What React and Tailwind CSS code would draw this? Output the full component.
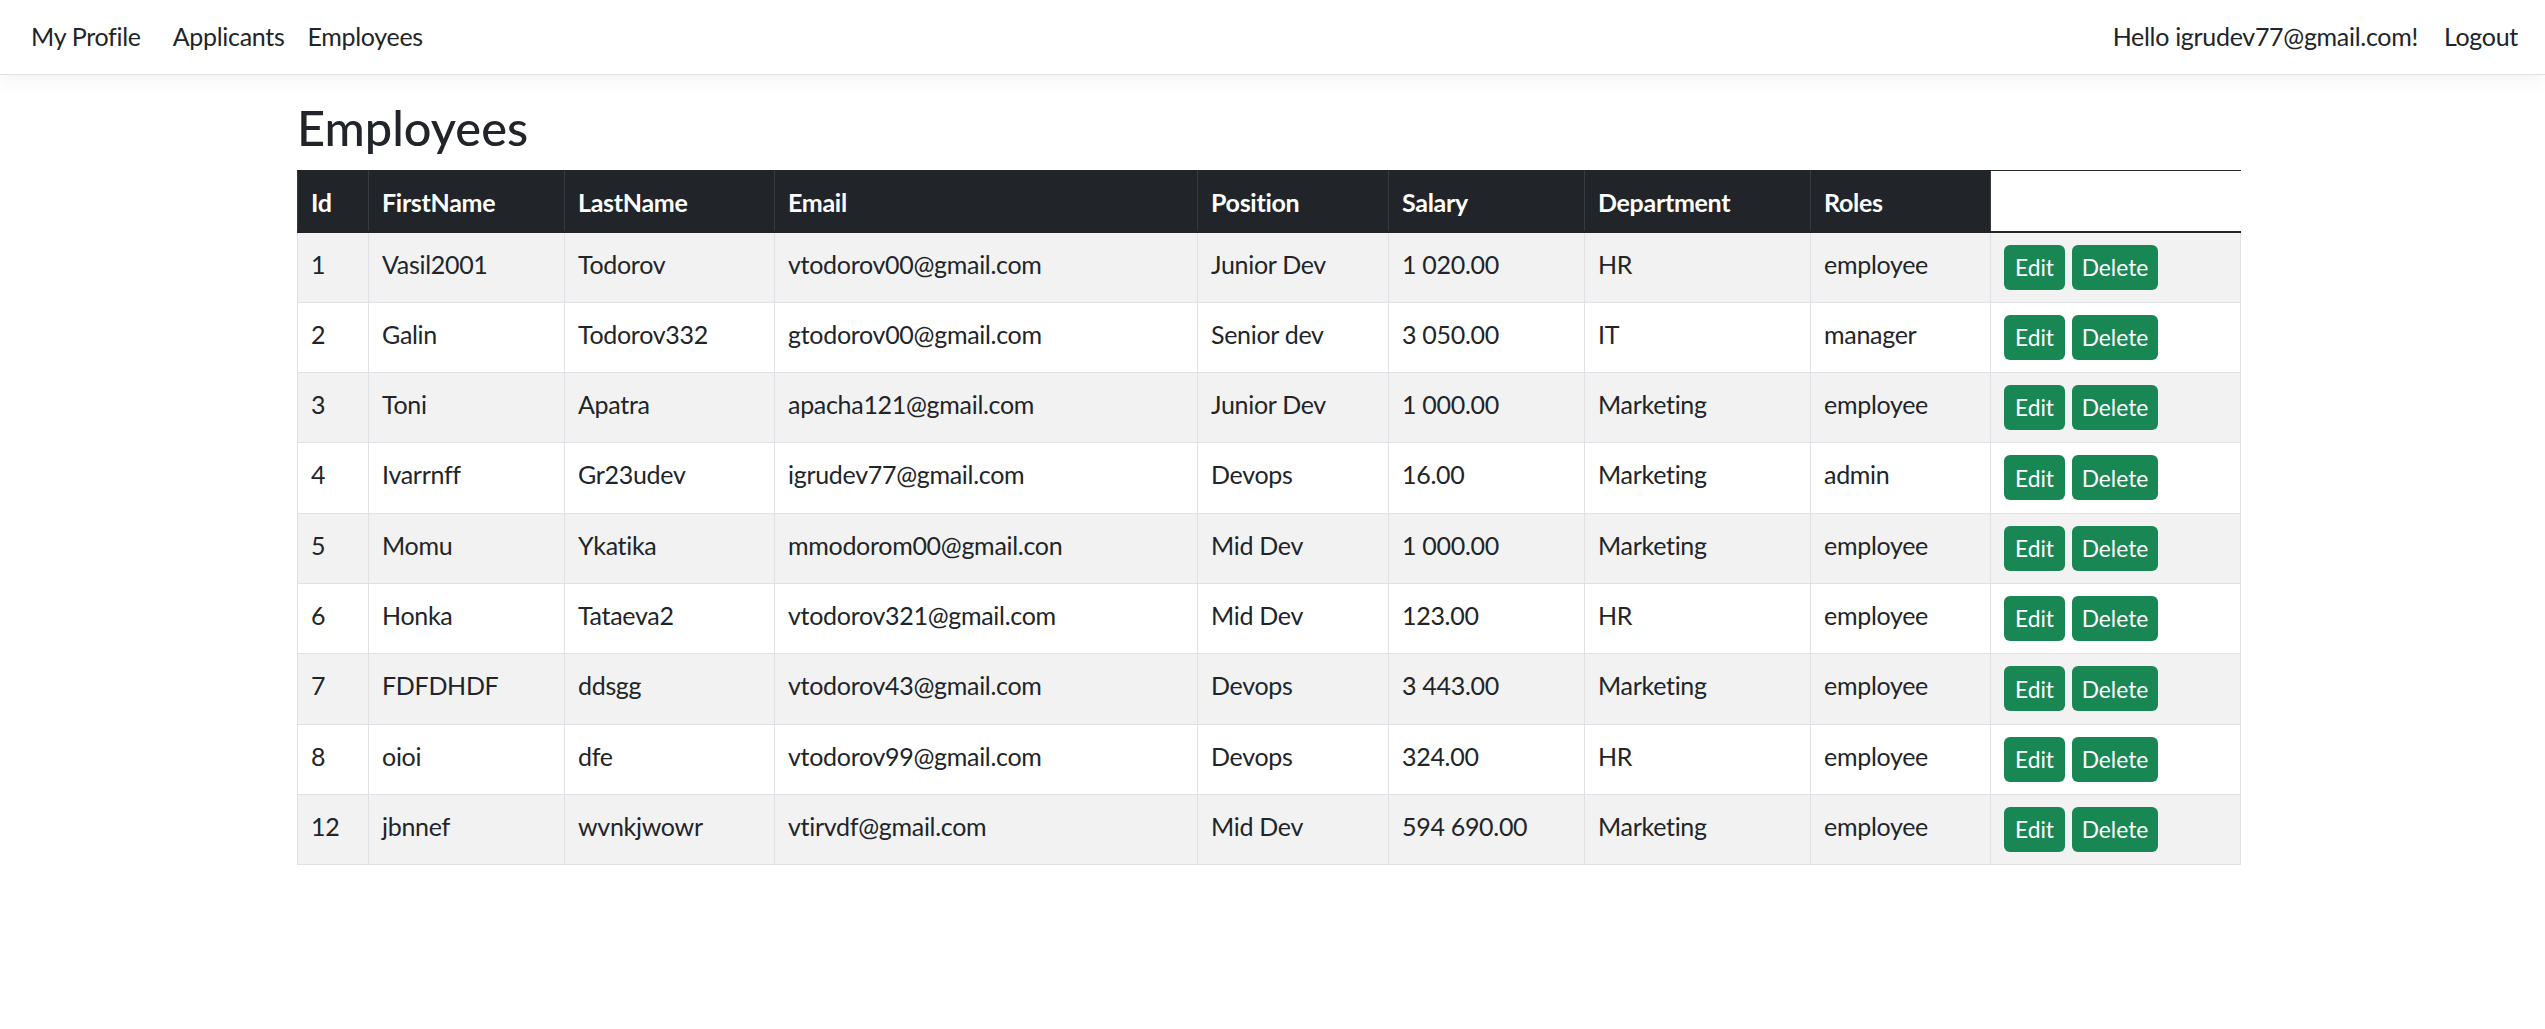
import React from 'react';

const columns = [
  { key: 'id', label: 'Id', width: 71 },
  { key: 'first', label: 'FirstName', width: 196 },
  { key: 'last', label: 'LastName', width: 210 },
  { key: 'email', label: 'Email', width: 423 },
  { key: 'position', label: 'Position', width: 191 },
  { key: 'salary', label: 'Salary', width: 196 },
  { key: 'department', label: 'Department', width: 226 },
  { key: 'roles', label: 'Roles', width: 180 },
];

const employees = [
  { id: 1, first: 'Vasil2001', last: 'Todorov', email: 'vtodorov00@gmail.com', position: 'Junior Dev', salary: '1\u00a0020.00', department: 'HR', roles: 'employee' },
  { id: 2, first: 'Galin', last: 'Todorov332', email: 'gtodorov00@gmail.com', position: 'Senior dev', salary: '3\u00a0050.00', department: 'IT', roles: 'manager' },
  { id: 3, first: 'Toni', last: 'Apatra', email: 'apacha121@gmail.com', position: 'Junior Dev', salary: '1\u00a0000.00', department: 'Marketing', roles: 'employee' },
  { id: 4, first: 'Ivarrnff', last: 'Gr23udev', email: 'igrudev77@gmail.com', position: 'Devops', salary: '16.00', department: 'Marketing', roles: 'admin' },
  { id: 5, first: 'Momu', last: 'Ykatika', email: 'mmodorom00@gmail.con', position: 'Mid Dev', salary: '1\u00a0000.00', department: 'Marketing', roles: 'employee' },
  { id: 6, first: 'Honka', last: 'Tataeva2', email: 'vtodorov321@gmail.com', position: 'Mid Dev', salary: '123.00', department: 'HR', roles: 'employee' },
  { id: 7, first: 'FDFDHDF', last: 'ddsgg', email: 'vtodorov43@gmail.com', position: 'Devops', salary: '3\u00a0443.00', department: 'Marketing', roles: 'employee' },
  { id: 8, first: 'oioi', last: 'dfe', email: 'vtodorov99@gmail.com', position: 'Devops', salary: '324.00', department: 'HR', roles: 'employee' },
  { id: 12, first: 'jbnnef', last: 'wvnkjwowr', email: 'vtirvdf@gmail.com', position: 'Mid Dev', salary: '594\u00a0690.00', department: 'Marketing', roles: 'employee' },
];

const Navbar = () => (
  <nav className="h-[75px] flex items-center justify-between bg-white border-b border-[#dee2e6] shadow-[0_6px_18px_rgba(0,0,0,0.05)] text-[25px] tracking-[-0.3px] text-[#212529]">
    <div className="flex items-center pl-[31px]">
      <a className="mr-[32px] cursor-pointer">My Profile</a>
      <a className="mr-[23px] cursor-pointer">Applicants</a>
      <a className="cursor-pointer">Employees</a>
    </div>
    <div className="flex items-center pr-[27px]">
      <span className="mr-[26px]">Hello igrudev77@gmail.com!</span>
      <a className="cursor-pointer">Logout</a>
    </div>
  </nav>
);

const EmployeesTable = () => (
  <table className="table-fixed border-collapse w-[1943px] text-[25px] tracking-[-0.3px] text-[#212529]">
    <colgroup>
      {columns.map((c) => (
        <col key={c.key} style={{ width: c.width }} />
      ))}
      <col style={{ width: 250 }} />
    </colgroup>
    <thead>
      <tr className="h-[62px]">
        {columns.map((c) => (
          <th
            key={c.key}
            className="bg-[#212529] text-white font-bold text-left align-middle px-[13px] pt-[3px] border border-[#373b3e] border-t-[#212529] border-b-2 border-b-[#212529]"
          >
            {c.label}
          </th>
        ))}
        <th className="bg-white border-t border-b-2 border-[#212529]" />
      </tr>
    </thead>
    <tbody>
      {employees.map((e, i) => (
        <tr key={e.id} className={`h-[70.33px] ${i % 2 === 0 ? 'bg-[#f2f2f2]' : 'bg-white'}`}>
          {columns.map((c) => (
            <td key={c.key} className="align-top px-[13px] pt-[12px] pb-[13px] leading-[39px] border border-[#dee2e6] whitespace-nowrap">
              {e[c.key]}
            </td>
          ))}
          <td className="align-top px-[13px] pt-[12px] border border-[#dee2e6]">
            <div className="flex gap-[7px] tracking-normal">
              <button className="w-[61px] h-[45px] rounded-[6px] bg-[#198754] text-white text-[22.75px] leading-none pt-[2px]">Edit</button>
              <button className="w-[86px] h-[45px] rounded-[6px] bg-[#198754] text-white text-[22.75px] leading-none pt-[2px]">Delete</button>
            </div>
          </td>
        </tr>
      ))}
    </tbody>
  </table>
);

export default function App() {
  return (
    <div className="min-h-screen bg-white font-['Lato',sans-serif]">
      <Navbar />
      <main className="pl-[297px] pt-[23px]">
        <h1 className="text-[48.75px] font-medium leading-[58.5px] mb-[13px] text-[#212529]">Employees</h1>
        <EmployeesTable />
      </main>
    </div>
  );
}
